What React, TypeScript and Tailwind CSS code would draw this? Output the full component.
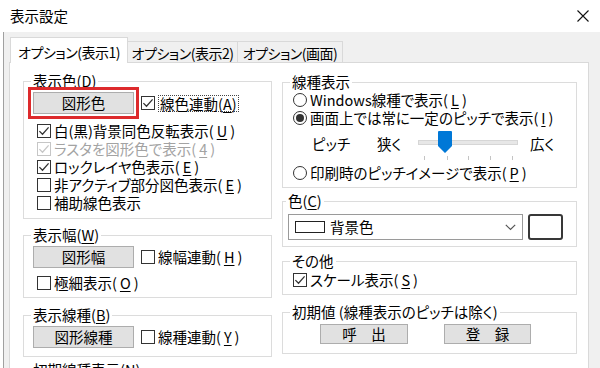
import React from 'react'

const U = ({ children }: { children: React.ReactNode }) => (
  <span className="underline underline-offset-[2px] decoration-1">{children}</span>
)

function Check({ checked, disabled }: { checked?: boolean; disabled?: boolean }) {
  return (
    <span
      className={`w-[14px] h-[14px] border bg-white shrink-0 flex items-center justify-center ${
        disabled ? 'border-[#c6c6c6]' : 'border-[#333]'
      }`}
    >
      {checked && (
        <svg width="12" height="12" viewBox="0 0 12 12">
          <path d="M1.4 6.1 4.5 9.2 10.6 2.4" fill="none" stroke={disabled ? '#c6c6c6' : '#333'} strokeWidth="1.3" />
        </svg>
      )}
    </span>
  )
}

function Radio({ checked }: { checked?: boolean }) {
  return (
    <span className="w-[14px] h-[14px] rounded-full border border-[#333] bg-white shrink-0 flex items-center justify-center">
      {checked && <span className="w-[8px] h-[8px] rounded-full bg-[#333]" />}
    </span>
  )
}

function Btn({ w, children }: { w: string; children: React.ReactNode }) {
  return (
    <button className={`${w} h-[22px] bg-[#e1e1e1] border border-[#adadad] flex items-center justify-center shrink-0`}>
      {children}
    </button>
  )
}

function Group({ title, className, children }: { title: React.ReactNode; className?: string; children?: React.ReactNode }) {
  return (
    <fieldset className={`border border-[#dcdcdc] px-[9px] ${className ?? ''}`}>
      <legend className="px-[2px] -ml-[2px] leading-[16px]">{title}</legend>
      {children}
    </fieldset>
  )
}

function Row({ children, className }: { children: React.ReactNode; className?: string }) {
  return <div className={`h-[18px] flex items-center gap-[3px] whitespace-nowrap ${className ?? ''}`}>{children}</div>
}

function Pitch() {
  const ticks = [6, 29, 50, 72, 94]
  return (
    <svg width="100" height="37" viewBox="0 0 100 37" className="shrink-0">
      <rect x="0.5" y="13.5" width="99" height="4" fill="#e7e7e7" stroke="#d6d6d6" />
      {ticks.map(t => (
        <rect key={t} x={t} y="29" width="1" height="4" fill="#c4c4c4" />
      ))}
      <path d="M20 4 H33 Q34 4 34 5 V19 L27 26 L20 19 V5 Q20 4 21 4 Z" fill="#0078d7" />
    </svg>
  )
}

export default function App() {
  return (
    <div className="w-[600px] h-[368px] overflow-hidden bg-white flex flex-col text-[14.5px] leading-[18px] text-black font-['Noto_Sans_CJK_JP','Noto_Sans',sans-serif] [font-feature-settings:'palt']">
      {/* title bar */}
      <div className="h-[32px] shrink-0 flex items-center justify-between pl-[10px] pr-[11px]">
        <span>表示設定</span>
        <svg width="12" height="12" viewBox="0 0 12 12">
          <path d="M0.5 0.5 11.5 11.5 M11.5 0.5 0.5 11.5" stroke="#111" strokeWidth="1.1" />
        </svg>
      </div>

      <div className="flex-1 min-h-0 flex flex-col ml-[3px] border-l border-[#a0a0a0] bg-[#f0f0f0] pl-[5px] pt-[5px]">
        {/* tabs */}
        <div className="flex items-end h-[26px] ml-px text-[14px] tracking-[-0.5px] whitespace-nowrap">
          <div className="relative z-10 w-[118px] h-[26px] -mb-px bg-white border border-b-0 border-[#d9d9d9] flex items-center justify-center pt-[2px]">
            オプション(表示1)
          </div>
          <div className="w-[110px] h-[21px] bg-[#f0f0f0] border border-b-0 border-l-0 border-[#d9d9d9] flex items-center justify-center pt-[2px]">
            オプション(表示2)
          </div>
          <div className="w-[105px] h-[21px] bg-[#f0f0f0] border border-b-0 border-l-0 border-[#d9d9d9] flex items-center justify-center pt-[2px]">
            オプション(画面)
          </div>
        </div>

        {/* panel */}
        <div className="flex-1 w-[580px] bg-white border border-[#d9d9d9] flex items-start gap-[10px] pl-[13px] pt-[10px]">
          {/* left column */}
          <div className="w-[249px] flex flex-col">
            <Group title={<>表示色(<U>D</U>)</>} className="pb-[6px]">
              <div className="mt-[3px] flex items-center gap-[7px]">
                <div className="outline-[3px] outline-[#dd2a2c] outline-offset-[2px]">
                  <Btn w="w-[101px]">図形色</Btn>
                </div>
                <div className="flex items-center gap-[3px]">
                  <Check checked />
                  <span className="border border-dotted border-[#444] leading-[15px] px-px">
                    線色連動(<U>A</U>)
                  </span>
                </div>
              </div>
              <div className="mt-[8px] ml-[4px] flex flex-col">
                <Row><Check checked />白(黒)背景同色反転表示(<U>U</U>)</Row>
                <Row className="text-[#a3a3a3]"><Check checked disabled />ラスタを図形色で表示(<U>4</U>)</Row>
                <Row><Check checked />ロックレイヤ色表示(<U>E</U>)</Row>
                <Row><Check />非アクティブ部分図色表示(<U>E</U>)</Row>
                <Row><Check />補助線色表示</Row>
              </div>
            </Group>

            <Group title={<>表示幅(<U>W</U>)</>} className="mt-[8px] pb-[5px]">
              <div className="mt-[3px] flex items-center gap-[7px]">
                <Btn w="w-[101px]">図形幅</Btn>
                <div className="flex items-center gap-[3px]"><Check />線幅連動(<U>H</U>)</div>
              </div>
              <Row className="mt-[6px] ml-[4px]"><Check />極細表示(<U>O</U>)</Row>
            </Group>

            <Group title={<>表示線種(<U>B</U>)</>} className="mt-[9px] pb-[8px]">
              <div className="mt-[3px] flex items-center gap-[7px]">
                <Btn w="w-[101px]">図形線種</Btn>
                <div className="flex items-center gap-[3px]"><Check />線種連動(<U>Y</U>)</div>
              </div>
            </Group>

            <Group title="初期線種表示(N)" className="mt-[5px] h-[40px]" />
          </div>

          {/* right column */}
          <div className="w-[295px] flex flex-col mt-px">
            <Group title="線種表示" className="pb-[5px]">
              <div className="mt-px ml-px flex flex-col">
                <Row><Radio />Windows線種で表示(<U>L</U>)</Row>
                <Row><Radio checked />画面上では常に一定のピッチで表示(<U>I</U>)</Row>
                <div className="h-[37px] flex items-center ml-[19px]">
                  <span className="w-[65px] shrink-0 -mt-[4px]">ピッチ</span>
                  <span className="w-[41px] shrink-0 -mt-[4px]">狭く</span>
                  <Pitch />
                  <span className="ml-[12px] -mt-[4px]">広く</span>
                </div>
                <Row><Radio />印刷時のピッチイメージで表示(<U>P</U>)</Row>
              </div>
            </Group>

            <Group title={<>色(<U>C</U>)</>} className="mt-[5px] pb-[6px] !px-[5px]">
              <div className="mt-[5px] flex items-center gap-[5px]">
                <div className="w-[235px] h-[26px] border border-[#9a9a9a] bg-white flex items-center pl-[6px] pr-[6px]">
                  <span className="w-[30px] h-[12px] border border-[#222] shrink-0" />
                  <span className="ml-[5px] flex-1">背景色</span>
                  <svg width="11" height="7" viewBox="0 0 11 7">
                    <path d="M0.8 0.8 5.5 5.5 10.2 0.8" fill="none" stroke="#555" strokeWidth="1.2" />
                  </svg>
                </div>
                <div className="w-[35px] h-[26px] border-2 border-[#383838] rounded-[3px] bg-white" />
              </div>
            </Group>

            <Group title="その他" className="mt-[6px] pb-[5px]">
              <Row className="mt-[2px] ml-px"><Check checked />スケール表示(<U>S</U>)</Row>
            </Group>

            <Group title="初期値 (線種表示のピッチは除く)" className="mt-[9px] pb-[9px]">
              <div className="mt-[4px] ml-[28px] flex items-center gap-[36px]">
                <Btn w="w-[88px] !h-[20px]">呼　出</Btn>
                <Btn w="w-[87px] !h-[20px]">登　録</Btn>
              </div>
            </Group>
          </div>
        </div>
      </div>
    </div>
  )
}
